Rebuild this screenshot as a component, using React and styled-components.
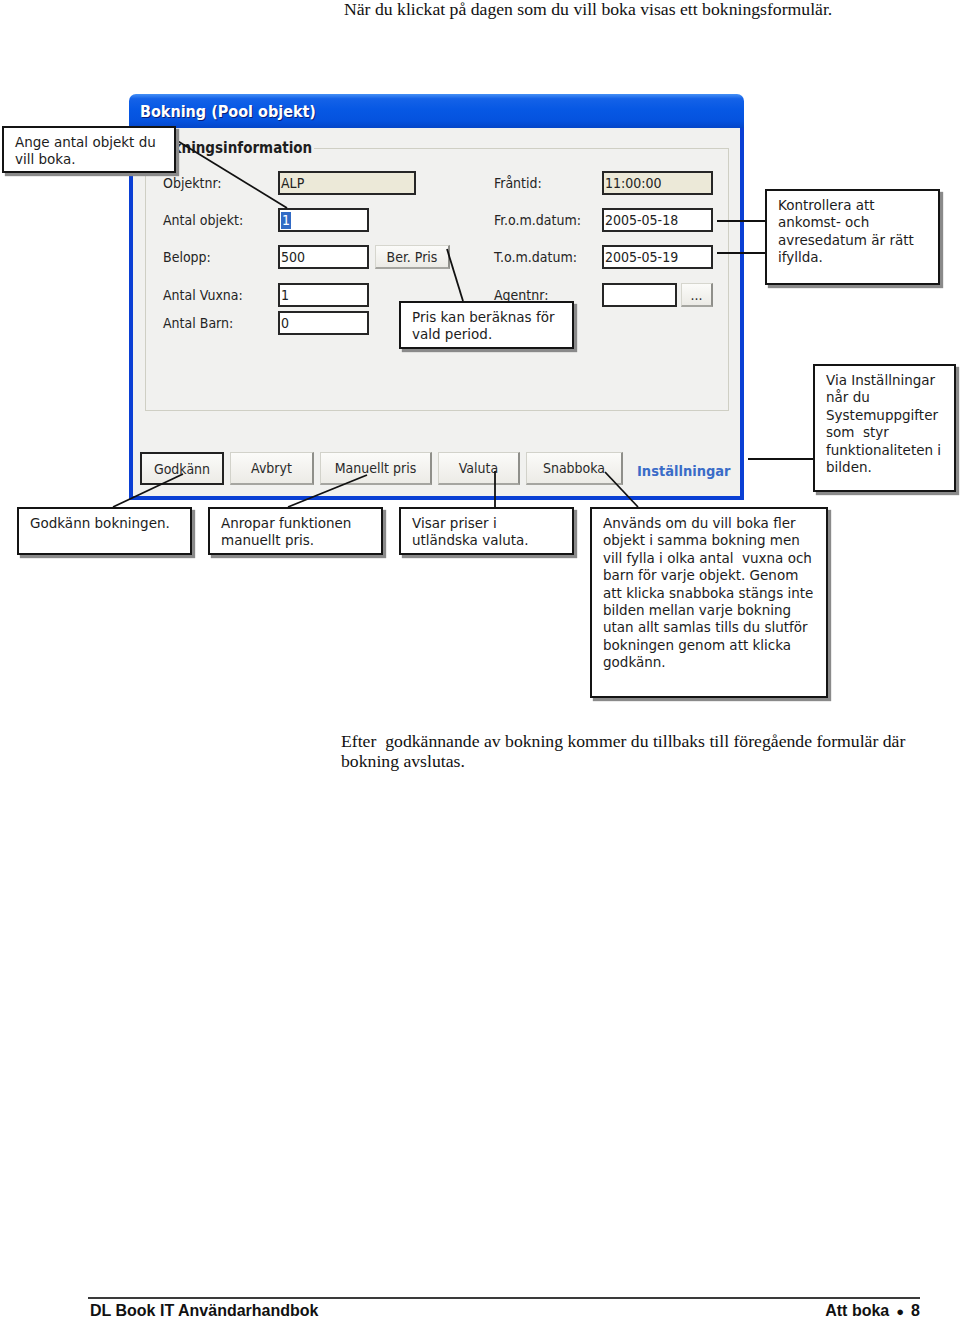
import React from 'react';
import styled, { createGlobalStyle } from 'styled-components';

const GlobalStyle = createGlobalStyle`
  html, body { margin: 0; padding: 0; background: #fff; }
  #root { width: 960px; }
`;

const Page = styled.div`
  position: relative;
  width: 960px;
  height: 1320px;
  display: flex;
  flex-direction: column;
  background: #fff;
  overflow: hidden;
`;

const SerifText = styled.p`
  margin: ${p => p.$mt}px 0 0 ${p => p.$ml}px;
  font-family: "Liberation Serif", "Times New Roman", serif;
  font-size: 17.7px;
  line-height: ${p => p.$lh}px;
  color: #111;
  white-space: pre;
`;

const Dialog = styled.div`
  margin: 75px 0 0 129px;
  width: 615px;
  height: 406px;
  display: flex;
  flex-direction: column;
  font-family: "DejaVu Sans Condensed", "DejaVu Sans", sans-serif;
  font-stretch: condensed;
`;

const TitleBar = styled.div`
  flex: none;
  height: 34px;
  border-radius: 7px 7px 0 0;
  background: linear-gradient(180deg, #4690f6 0%, #1462e8 14%, #0758e4 45%, #0552de 80%, #0446c8 100%);
  display: flex;
  align-items: center;
  padding-left: 11px;
  color: #fff;
  font-weight: bold;
  font-size: 16px;
  text-shadow: 1px 1px 0 #0a1f78;
`;

const Frame = styled.div`
  flex: 1;
  border: 4px solid #0a3fd4;
  border-top: 0;
  background: #f1f1ef;
  display: flex;
  flex-direction: column;
`;

const GroupBox = styled.div`
  position: relative;
  box-sizing: border-box;
  margin: 20px 11px 0 12px;
  height: 263px;
  border: 1px solid #cfcfc4;
  padding: 22px 0 0 17px;
  display: grid;
  grid-template-columns: 331px auto;
  align-content: start;
`;

const GroupLegend = styled.span`
  position: absolute;
  top: -10px;
  left: 5px;
  padding: 0 2px;
  background: #f1f1ef;
  font-weight: bold;
  font-size: 15px;
  line-height: 19px;
  color: #1e1e1e;
`;

const Column = styled.div`
  display: flex;
  flex-direction: column;
`;

const Row = styled.div`
  display: flex;
  align-items: center;
  height: 24px;
  margin-top: ${p => p.$gap}px;
`;

const Label = styled.span`
  width: ${p => p.$w}px;
  flex: none;
  font-size: 14px;
  color: #242424;
`;

const Field = styled.div`
  box-sizing: border-box;
  width: ${p => p.$w}px;
  height: 24px;
  border: 2px solid #262626;
  background: ${p => (p.$readonly ? '#ece9d8' : '#fff')};
  font-size: 14px;
  color: #222;
  padding-left: 1px;
  display: flex;
  align-items: center;
`;

const Selected = styled.span`
  background: #316ac5;
  color: #fff;
  padding: 0 1px;
  line-height: 17px;
`;

const SmallButton = styled.div`
  box-sizing: border-box;
  width: ${p => p.$w}px;
  height: 24px;
  margin-left: ${p => p.$ml}px;
  background: linear-gradient(180deg, #fbfbf9, #ecebe6);
  border: 1px solid #d6d6ce;
  border-right: 2px solid #8f8f8a;
  border-bottom: 2px solid #a5a5a0;
  font-size: 14px;
  color: #2a2a2a;
  display: flex;
  align-items: center;
  justify-content: center;
`;

const ButtonRow = styled.div`
  display: flex;
  align-items: center;
  gap: 6px;
  margin: 41px 0 0 7px;
  height: 33px;
`;

const DlgButton = styled.div`
  box-sizing: border-box;
  width: ${p => p.$w}px;
  height: 33px;
  background: linear-gradient(180deg, #fbfbf9, #ecebe6);
  border: ${p => (p.$default ? '2px solid #222' : '1px solid #d2d2ca')};
  ${p => (p.$default ? '' : 'border-right: 2px solid #8f8f8a; border-bottom: 2px solid #a5a5a0;')}
  font-size: 14px;
  color: #2a2a2a;
  display: flex;
  align-items: center;
  justify-content: center;
`;

const LinkText = styled.span`
  margin-left: 8px;
  color: #3a6cc8;
  font-weight: bold;
  font-size: 14.5px;
  padding-top: 4px;
`;

const Connectors = styled.svg`
  position: absolute;
  left: 0;
  top: 0;
  pointer-events: none;
`;

const Callout = styled.div`
  position: absolute;
  left: ${p => p.$x}px;
  top: ${p => p.$y}px;
  width: ${p => p.$w}px;
  height: ${p => p.$h}px;
  box-sizing: border-box;
  background: #fff;
  border: 2px solid #141414;
  box-shadow: 3px 3px 1px #8a8a8a;
  padding: 6px 4px 0 11px;
  font-family: "DejaVu Sans", "Liberation Sans", sans-serif;
  font-size: 13.5px;
  line-height: 17.4px;
  color: #1c1c1c;
  white-space: pre;
`;

const Footer = styled.div`
  margin: auto 40px 0 88px;
  border-top: 2px solid #3a3a3a;
  padding: 3px 0 0 2px;
  display: flex;
  justify-content: space-between;
  font-family: "Liberation Sans", Arial, sans-serif;
  font-weight: bold;
  font-size: 16px;
  line-height: 17px;
  color: #111;
`;

const Bullet = styled.span`
  display: inline-block;
  margin: 0 7px;
  font-size: 13px;
`;

const callouts = [
  { x: 2, y: 126, w: 174, h: 47, lines: ['Ange antal objekt du', 'vill boka.'] },
  { x: 399, y: 301, w: 175, h: 48, lines: ['Pris kan beräknas för', 'vald period.'] },
  { x: 765, y: 189, w: 175, h: 96, lines: ['Kontrollera att', 'ankomst- och', 'avresedatum är rätt', 'ifyllda.'] },
  { x: 813, y: 364, w: 143, h: 128, lines: ['Via Inställningar', 'når du', 'Systemuppgifter', 'som  styr', 'funktionaliteten i', 'bilden.'] },
  { x: 17, y: 507, w: 175, h: 48, lines: ['Godkänn bokningen.'] },
  { x: 208, y: 507, w: 175, h: 48, lines: ['Anropar funktionen', 'manuellt pris.'] },
  { x: 399, y: 507, w: 175, h: 48, lines: ['Visar priser i', 'utländska valuta.'] },
  {
    x: 590, y: 507, w: 238, h: 191,
    lines: [
      'Används om du vill boka fler',
      'objekt i samma bokning men',
      'vill fylla i olka antal  vuxna och',
      'barn för varje objekt. Genom',
      'att klicka snabboka stängs inte',
      'bilden mellan varje bokning',
      'utan allt samlas tills du slutför',
      'bokningen genom att klicka',
      'godkänn.',
    ],
  },
];

const connectors = [
  [176, 140, 287, 208],
  [447, 249, 463, 301],
  [717, 221, 765, 221],
  [717, 253, 765, 253],
  [748, 459, 813, 459],
  [183, 474, 113, 507],
  [367, 475, 288, 507],
  [495, 471, 495, 507],
  [605, 472, 638, 507],
];

const leftRows = [
  { label: 'Objektnr:', gap: 0, field: { w: 138, readonly: true, text: 'ALP' } },
  { label: 'Antal objekt:', gap: 13, field: { w: 91, selected: '1' } },
  { label: 'Belopp:', gap: 13, field: { w: 91, text: '500' }, button: { w: 75, ml: 6, text: 'Ber. Pris' } },
  { label: 'Antal Vuxna:', gap: 14, field: { w: 91, text: '1' } },
  { label: 'Antal Barn:', gap: 4, field: { w: 91, text: '0' } },
];

const rightRows = [
  { label: 'Fråntid:', gap: 0, field: { w: 111, readonly: true, text: '11:00:00' } },
  { label: 'Fr.o.m.datum:', gap: 13, field: { w: 111, text: '2005-05-18' } },
  { label: 'T.o.m.datum:', gap: 13, field: { w: 111, text: '2005-05-19' } },
  { label: 'Agentnr:', gap: 14, field: { w: 75, text: '' }, button: { w: 32, ml: 4, text: '...' } },
];

const buttons = [
  { text: 'Godkänn', w: 84, def: true },
  { text: 'Avbryt', w: 84 },
  { text: 'Manuellt pris', w: 112 },
  { text: 'Valuta', w: 82 },
  { text: 'Snabboka', w: 97 },
];

function FormRow({ row, labelWidth }) {
  const { field, button } = row;
  return (
    <Row $gap={row.gap}>
      <Label $w={labelWidth}>{row.label}</Label>
      <Field $w={field.w} $readonly={field.readonly}>
        {field.selected ? <Selected>{field.selected}</Selected> : field.text}
      </Field>
      {button && (
        <SmallButton $w={button.w} $ml={button.ml}>
          {button.text}
        </SmallButton>
      )}
    </Row>
  );
}

export default function App() {
  return (
    <>
      <GlobalStyle />
      <Page>
        <SerifText $mt={0} $ml={344} $lh={19}>
          När du klickat på dagen som du vill boka visas ett bokningsformulär.
        </SerifText>

        <Dialog>
          <TitleBar>Bokning (Pool objekt)</TitleBar>
          <Frame>
            <GroupBox>
              <GroupLegend>Bokningsinformation</GroupLegend>
              <Column>
                {leftRows.map(r => (
                  <FormRow key={r.label} row={r} labelWidth={115} />
                ))}
              </Column>
              <Column>
                {rightRows.map(r => (
                  <FormRow key={r.label} row={r} labelWidth={108} />
                ))}
              </Column>
            </GroupBox>
            <ButtonRow>
              {buttons.map(b => (
                <DlgButton key={b.text} $w={b.w} $default={b.def}>
                  {b.text}
                </DlgButton>
              ))}
              <LinkText>Inställningar</LinkText>
            </ButtonRow>
          </Frame>
        </Dialog>

        <SerifText $mt={231} $ml={341} $lh={20}>
          {'Efter  godkännande av bokning kommer du tillbaks till föregående formulär där\nbokning avslutas.'}
        </SerifText>

        <Footer>
          <span>DL Book IT Användarhandbok</span>
          <span>
            Att boka<Bullet>●</Bullet>8
          </span>
        </Footer>

        <Connectors width="960" height="1320" viewBox="0 0 960 1320">
          {connectors.map(([x1, y1, x2, y2], i) => (
            <line key={i} x1={x1} y1={y1} x2={x2} y2={y2} stroke="#111" strokeWidth="1.8" />
          ))}
        </Connectors>

        {callouts.map((c, i) => (
          <Callout key={i} $x={c.x} $y={c.y} $w={c.w} $h={c.h}>
            {c.lines.join('\n')}
          </Callout>
        ))}
      </Page>
    </>
  );
}
